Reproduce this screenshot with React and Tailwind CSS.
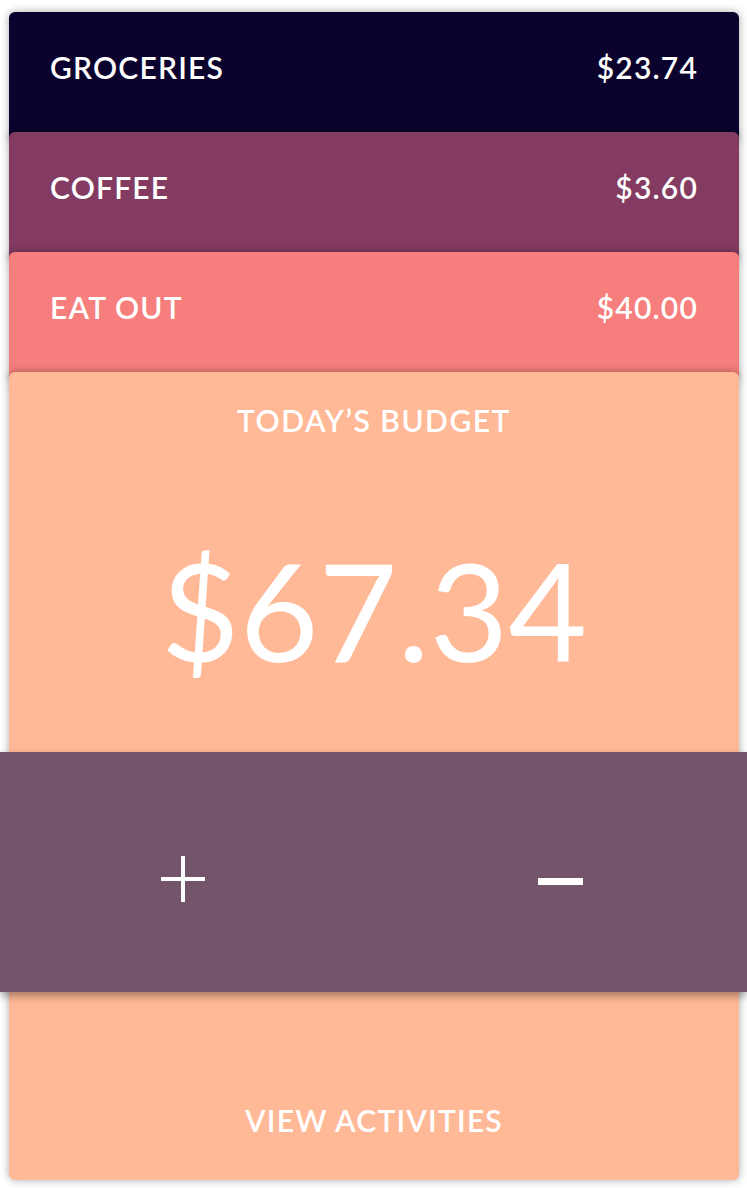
export default function App() {
  const rows = [
    { label: "GROCERIES", amount: "$23.74", bg: "bg-[#0b032d]" },
    { label: "COFFEE", amount: "$3.60", bg: "bg-[#843b62]" },
    { label: "EAT OUT", amount: "$40.00", bg: "bg-[#f67e7d]" },
  ];
  return (
    <div
      className="min-h-[1188px] w-[747px] bg-white pt-[12px] pb-[8px] pl-[9px] pr-[8px] overflow-hidden"
      style={{ fontFamily: "Lato, 'Open Sans', sans-serif" }}
    >
      {rows.map((r, i) => (
        <div
          key={r.label}
          className={`${r.bg} ${i === 0 ? "" : "-mt-[10px]"} h-[130px] rounded-[6px] shadow-[0_0_8px_rgba(0,0,0,0.35)] text-white flex items-start justify-between pl-[41px] pr-[41px]`}
        >
          <div className="h-[110px] flex items-center text-[30px] font-semibold tracking-[1.2px]">
            {r.label}
          </div>
          <div className="h-[110px] flex items-center text-[30px] font-semibold tracking-[1.2px]">
            {r.amount}
          </div>
        </div>
      ))}
      <div className="-mt-[10px] h-[808px] rounded-[6px] bg-[#ffb997] shadow-[0_0_8px_rgba(0,0,0,0.35)] text-white flex flex-col">
        <div className="h-[96px] flex items-center justify-center text-[30px] font-semibold tracking-[1.5px]">
          TODAY’S BUDGET
        </div>
        <div className="h-[284px] flex items-center justify-center text-[136px] font-normal leading-none">
          $67.34
        </div>
        <div className="-ml-[9px] -mr-[8px] h-[240px] bg-[#74546a] flex shadow-[0_4px_8px_rgba(0,0,0,0.35)]">
          <div className="w-[374px] h-full flex items-center justify-center border-r border-[#6d4e63]">
            <div className="relative w-[44px] h-[46px] -ml-[8px] mt-[14px]">
              <div className="absolute left-[20px] top-0 w-[4px] h-[46px] bg-white" />
              <div className="absolute left-0 top-[21px] w-[44px] h-[4px] bg-white" />
            </div>
          </div>
          <div className="flex-1 h-full flex items-center justify-center">
            <div className="w-[45px] h-[7px] bg-white mt-[18px]" />
          </div>
        </div>
        <div className="h-[188px] pt-[68px] flex items-center justify-center text-[30px] font-semibold tracking-[1.2px]">
          VIEW ACTIVITIES
        </div>
      </div>
    </div>
  );
}
